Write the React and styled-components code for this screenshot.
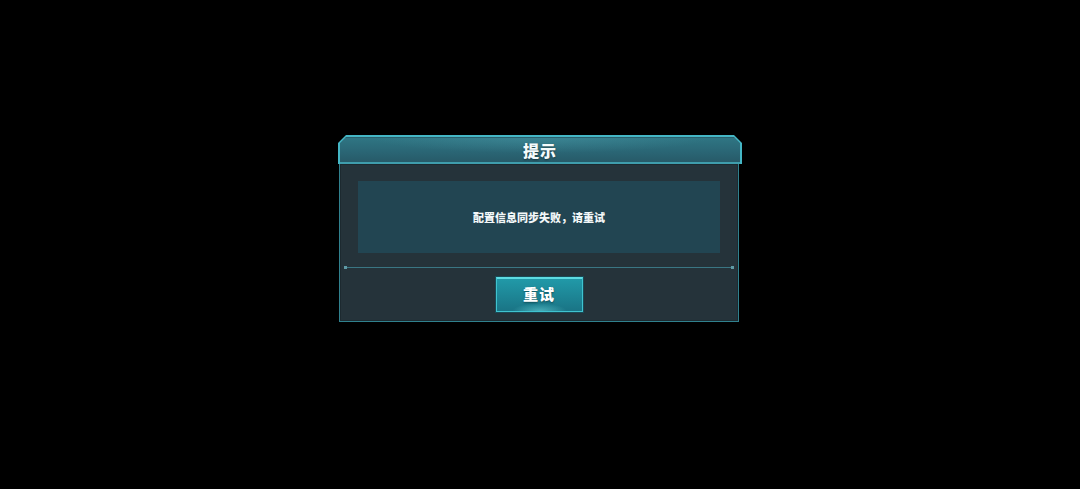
import React from 'react';
import styled, { createGlobalStyle } from 'styled-components';

const GlobalStyle = createGlobalStyle`
  html, body {
    margin: 0;
    padding: 0;
    background: #000;
  }
  body {
    font-family: "Noto Sans CJK SC", "Noto Sans", sans-serif;
  }
`;

const Screen = styled.div`
  width: 1080px;
  height: 489px;
  background: #000;
  padding-top: 135px;
  box-sizing: border-box;
`;

const Dialog = styled.div`
  width: 404px;
  margin-left: 338px;
  display: flex;
  flex-direction: column;
`;

const chamfer = (c) => `polygon(${c}px 0, calc(100% - ${c}px) 0, 100% ${c}px, 100% 100%, 0 100%, 0 ${c}px)`;

const HeaderFrame = styled.div`
  height: 29px;
  padding: 2px 2px 0;
  box-sizing: border-box;
  background: #44b6c5;
  clip-path: ${chamfer(8)};
`;

const Header = styled.div`
  height: 100%;
  display: flex;
  align-items: center;
  justify-content: center;
  background:
    radial-gradient(ellipse 60% 90% at 50% 0%, rgba(80, 160, 175, 0.35), transparent 70%),
    linear-gradient(180deg, #2f7583 0%, #2a6574 60%, #275a68 100%);
  border-top: 1px solid #2b5f6c;
  border-bottom: 2px solid #3f9dac;
  box-sizing: border-box;
  clip-path: ${chamfer(6)};
`;

const Title = styled.div`
  color: #f4fbfc;
  font-size: 16px;
  font-weight: 900;
  letter-spacing: 1px;
  line-height: 1;
  text-shadow: 0 1px 2px rgba(0, 0, 0, 0.45);
`;

const Body = styled.div`
  margin: 0 3px 0 1px;
  height: 158px;
  box-sizing: border-box;
  background: #25333a;
  border: 1px solid #30818e;
  border-top: none;
  box-shadow: inset 0 0 0 1px #1d2a30;
  display: flex;
  flex-direction: column;
  align-items: center;
  padding-top: 17px;
`;

const Message = styled.div`
  width: 362px;
  height: 72px;
  background: #224552;
  display: flex;
  align-items: center;
  justify-content: center;
  color: #f2f7f8;
  font-size: 11px;
  font-weight: 900;
`;

const Divider = styled.div`
  position: relative;
  width: 390px;
  height: 1px;
  margin-top: 14px;
  background: #3a7683;

  &::before,
  &::after {
    content: '';
    position: absolute;
    top: -1px;
    width: 3px;
    height: 3px;
    background: #5f9aa5;
  }
  &::before { left: 0; }
  &::after { right: 0; }
`;

const Button = styled.button`
  margin-top: 9px;
  width: 87px;
  height: 35px;
  padding: 0 0 3px;
  border: 1px solid #3fc3cf;
  border-top: 2px solid #5ddbe2;
  box-sizing: border-box;
  background:
    radial-gradient(ellipse 40% 30% at 50% 100%, rgba(120, 230, 235, 0.5), transparent 80%),
    linear-gradient(180deg, #2199a8 0%, #1d8595 55%, #1a7485 100%);
  color: #fff;
  font-family: inherit;
  font-size: 15px;
  font-weight: 900;
  letter-spacing: 1px;
  line-height: 1;
  text-shadow: 0 1px 2px rgba(0, 0, 0, 0.4);
  box-shadow: 0 0 0 1px #1b4a55;
  cursor: pointer;
`;

const App = () => (
  <Screen>
    <GlobalStyle />
    <Dialog>
      <HeaderFrame>
        <Header>
          <Title>提示</Title>
        </Header>
      </HeaderFrame>
      <Body>
        <Message>配置信息同步失败，请重试</Message>
        <Divider />
        <Button>重试</Button>
      </Body>
    </Dialog>
  </Screen>
);

export default App;
